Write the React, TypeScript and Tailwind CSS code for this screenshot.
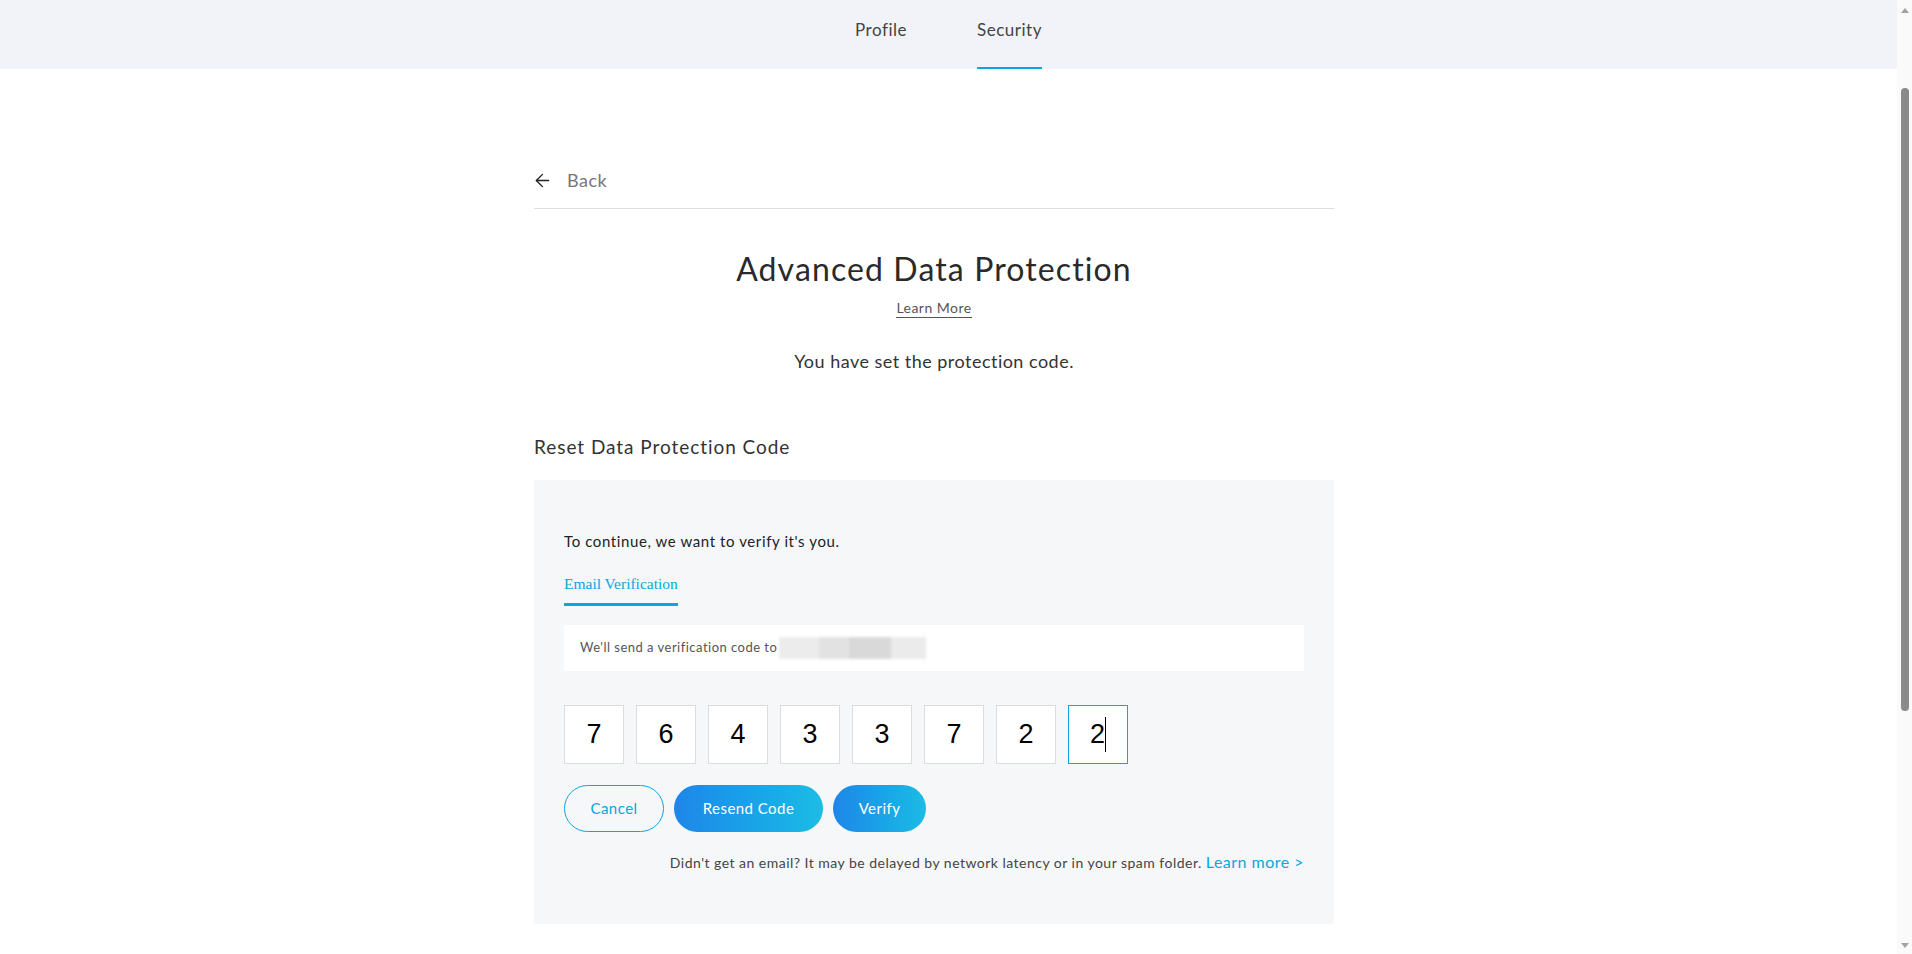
import React from 'react';
import { ArrowLeft } from 'lucide-react';

const code = ['7', '6', '4', '3', '3', '7', '2', '2'];

const Scrollbar: React.FC = () => (
    <div className="w-[15px] h-full bg-[#fafafa] flex flex-col items-center shrink-0">
        <div className="mt-[8px] w-0 h-0 border-l-[4px] border-r-[4px] border-b-[5px] border-l-transparent border-r-transparent border-b-[#a3a3a3]" />
        <div className="mt-[75px] w-[8px] h-[623px] rounded-full bg-[#8a8a8a]" />
        <div className="flex-1" />
        <div className="mb-[6px] w-0 h-0 border-l-[4px] border-r-[4px] border-t-[5px] border-l-transparent border-r-transparent border-t-[#a3a3a3]" />
    </div>
);

const btn = "h-[47px] rounded-full text-[15px] tracking-[0.03em] font-['Lato',sans-serif]";

const App: React.FC = () => {
    return (
        <div className="flex h-screen overflow-hidden bg-white text-[#333] tracking-[0.03em] font-['Lato',sans-serif]">
            <div className="flex-1 flex flex-col min-w-0">
                {/* Tabs */}
                <header className="h-[69px] bg-[#f2f3f8] flex justify-center gap-[70px] shrink-0">
                    <button className="h-full text-[17px] text-[#444] leading-none flex items-center pb-[10px] tracking-[0.03em] font-['Lato',sans-serif]">
                        Profile
                    </button>
                    <button className="h-full text-[17px] text-[#444] leading-none flex items-center pt-[2px] pb-[10px] border-b-2 border-[#0aa6e0] tracking-[0.03em] font-['Lato',sans-serif]">
                        Security
                    </button>
                </header>

                <main className="flex-1 pt-[99px]">
                    <div className="w-[800px] ml-[534px]">
                        <div className="flex items-center gap-[14px] pb-4 border-b border-[#dedede]">
                            <ArrowLeft size={21} strokeWidth={1.6} className="text-[#222] -ml-[2px]" />
                            <span className="text-[18px] leading-[24px] text-[#777]">Back</span>
                        </div>

                        <div className="flex flex-col items-center">
                            <h1 className="mt-[40px] text-[32px] leading-[40px] tracking-[0.035em] text-[#2a2a2a] font-normal">Advanced Data Protection</h1>
                            <a className="mt-[10px] text-[14px] leading-[18px] text-[#555] border-b border-[#555] cursor-pointer">Learn More</a>
                            <p className="mt-[31px] text-[18px] leading-[24px] text-[#333]">You have set the protection code.</p>
                        </div>

                        <h2 className="mt-[62px] text-[19px] leading-[24px] tracking-[0.05em] text-[#333] font-normal">Reset Data Protection Code</h2>

                        <section className="mt-[21px] bg-[#f6f7f9] px-[30px] pt-[51px] pb-[51px]">
                            <p className="text-[15px] leading-[20px] tracking-[0.04em] text-[#222]">To continue, we want to verify it's you.</p>

                            <div className="mt-[20px]">
                                <span className="inline-block pb-[9px] border-b-[3px] border-[#0aa6e0] text-[15.5px] leading-[20px] tracking-normal text-[#0aa6e0] font-['Liberation_Serif',serif]">
                                    Email Verification
                                </span>
                            </div>

                            <div className="mt-[19px] h-[46px] bg-white px-[16px] flex items-center text-[13px] text-[#555]">
                                <span>We'll send a verification code to</span>
                                <span className="ml-[2px] w-[147px] h-[22px] blur-[1.5px] flex">
                                    <span className="w-[40px] h-full bg-[#ececec]" />
                                    <span className="w-[30px] h-full bg-[#e2e2e2]" />
                                    <span className="w-[42px] h-full bg-[#d9d9d9]" />
                                    <span className="w-[35px] h-full bg-[#ebebeb]" />
                                </span>
                            </div>

                            <div className="mt-[34px] flex gap-[12px]">
                                {code.map((d, i) => {
                                    const last = i === code.length - 1;
                                    return (
                                        <div
                                            key={i}
                                            className={
                                                last
                                                    ? 'w-[60px] h-[59px] bg-white border border-[#0aa6e0] flex items-center justify-center'
                                                    : 'w-[60px] h-[59px] bg-white border border-[#dcdcdc] flex items-center justify-center'
                                            }
                                        >
                                            <span className="text-[27px] leading-none tracking-normal text-black font-['Liberation_Sans',sans-serif]">{d}</span>
                                            {last && <span className="w-px h-[35px] bg-black" />}
                                        </div>
                                    );
                                })}
                            </div>

                            <div className="mt-[21px] flex gap-[10px]">
                                <button className={`${btn} w-[100px] border border-[#0aa6e0] text-[#0aa6e0] bg-transparent`}>
                                    Cancel
                                </button>
                                <button className={`${btn} w-[149px] bg-linear-to-r from-[#1e86e9] to-[#1cbce5] text-white`}>
                                    Resend Code
                                </button>
                                <button className={`${btn} w-[93px] bg-linear-to-r from-[#1e86e9] to-[#1cbce5] text-white`}>
                                    Verify
                                </button>
                            </div>

                            <p className="mt-[20px] text-right text-[14px] leading-[20px] text-[#444]">
                                Didn't get an email? It may be delayed by network latency or in your spam folder.{' '}
                                <a className="text-[16px] text-[#0aa6e0] cursor-pointer">Learn more &gt;</a>
                            </p>
                        </section>
                    </div>
                </main>
            </div>
            <Scrollbar />
        </div>
    );
};

export default App;
